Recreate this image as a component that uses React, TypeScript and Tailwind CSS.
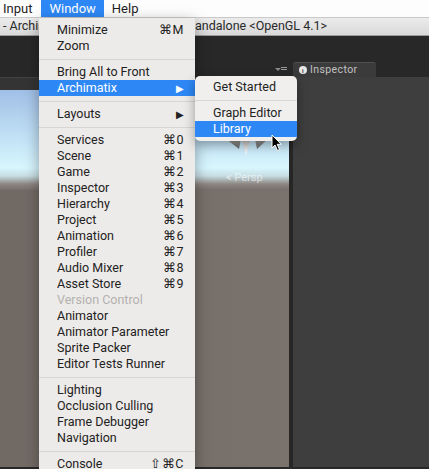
import React from 'react';

type Row =
  | { sep: true }
  | { label: string; keys?: string; arrow?: boolean; disabled?: boolean; active?: boolean };

const windowMenu: Row[] = [
  { label: 'Minimize', keys: '⌘M' },
  { label: 'Zoom' },
  { sep: true },
  { label: 'Bring All to Front' },
  { label: 'Archimatix', arrow: true, active: true },
  { sep: true },
  { label: 'Layouts', arrow: true },
  { sep: true },
  { label: 'Services', keys: '⌘0' },
  { label: 'Scene', keys: '⌘1' },
  { label: 'Game', keys: '⌘2' },
  { label: 'Inspector', keys: '⌘3' },
  { label: 'Hierarchy', keys: '⌘4' },
  { label: 'Project', keys: '⌘5' },
  { label: 'Animation', keys: '⌘6' },
  { label: 'Profiler', keys: '⌘7' },
  { label: 'Audio Mixer', keys: '⌘8' },
  { label: 'Asset Store', keys: '⌘9' },
  { label: 'Version Control', disabled: true },
  { label: 'Animator' },
  { label: 'Animator Parameter' },
  { label: 'Sprite Packer' },
  { label: 'Editor Tests Runner' },
  { sep: true },
  { label: 'Lighting' },
  { label: 'Occlusion Culling' },
  { label: 'Frame Debugger' },
  { label: 'Navigation' },
  { sep: true },
  { label: 'Console', keys: '⇧⌘C' },
];

const archimatixMenu: Row[] = [
  { label: 'Get Started' },
  { sep: true },
  { label: 'Graph Editor' },
  { label: 'Library', active: true },
];

function MenuRows({ rows }: { rows: Row[] }) {
  return (
    <>
      {rows.map((r, i) =>
        'sep' in r ? (
          <div key={i} className="flex h-[10px] items-center">
            <div className="h-px w-full bg-[#d8d6d4]" />
          </div>
        ) : (
          <div
            key={i}
            className={`flex h-4 items-center justify-between pl-[18px] pr-[11px] ${
              r.active ? 'bg-[#2d88f6] text-white' : r.disabled ? 'text-[#b3b1af]' : 'text-[#222]'
            }`}
          >
            <span>{r.label}</span>
            {r.keys && <span className="tracking-[0.5px]">{r.keys}</span>}
            {r.arrow && <span className="text-[10px]">▶</span>}
          </div>
        ),
      )}
    </>
  );
}

// orientation gizmo in the scene view corner
function Gizmo() {
  return (
    <svg width="52" height="24" viewBox="0 0 52 24" className="absolute left-[222px] top-[44px]">
      <defs>
        <linearGradient id="cone" x1="0" y1="0" x2="0" y2="1">
          <stop offset="0" stopColor="#a4a4a4" />
          <stop offset="1" stopColor="#6c6c6c" />
        </linearGradient>
        <linearGradient id="tip" x1="0" y1="0" x2="0" y2="1">
          <stop offset="0" stopColor="#c8c8c8" />
          <stop offset="1" stopColor="#ffffff" />
        </linearGradient>
      </defs>
      <path d="M3 4 L19 5 L17 15 Z" fill="url(#cone)" />
      <path d="M33 5 L47 4 L35 15 Z" fill="url(#cone)" />
      <path d="M20 7 L28 7 L24 21 Z" fill="url(#tip)" />
    </svg>
  );
}

function Cursor() {
  return (
    <svg width="12" height="18" viewBox="0 0 12 18" className="absolute left-[271px] top-[134px]">
      <path
        d="M1 1 L1 14 L4 11 L6.5 16.5 L8.5 15.6 L6.2 10.3 L10.2 10.3 Z"
        fill="#000"
        stroke="#fff"
        strokeWidth="1"
        strokeLinejoin="round"
      />
    </svg>
  );
}

export default function App() {
  return (
    <div className="relative h-[469px] w-[429px] overflow-hidden bg-[#282828] font-['Roboto','Liberation_Sans',sans-serif]">
      {/* system menu bar */}
      <div className="flex h-[18px] items-center border-b border-[#c9c9c9] bg-[#fdfdfd] text-[13px] text-[#1e1e1e]">
        <span className="pl-[3px] pr-[9px]">Input</span>
        <span className="flex h-full items-center bg-[#2d88f6] px-2 text-white">Window</span>
        <span className="pl-2">Help</span>
      </div>

      {/* editor window title */}
      <div className="flex h-[18px] items-center whitespace-nowrap border-b border-[#9a9a9a] bg-[linear-gradient(to_bottom,#ebebeb,#d9d9d9)] text-[12.5px] text-[#2a2a2a]">
        <span className="w-[195px] pl-[3px]">- Archimatix</span>
        <span>andalone &lt;OpenGL 4.1&gt;</span>
      </div>

      {/* main toolbar */}
      <div className="h-[26px] bg-[#282828]" />

      {/* dock tab strip */}
      <div className="flex h-[15px] items-end bg-[#282828]">
        <div className="flex w-[289px] justify-end pr-[2px]">
          <svg width="12" height="6" viewBox="0 0 12 6" className="mb-[5px]">
            <path d="M0 2 L3 5 L6 2 Z" fill="#8a8a8a" />
            <rect x="6" y="1" width="6" height="1" fill="#9a9a9a" />
            <rect x="6" y="3" width="6" height="1" fill="#9a9a9a" />
          </svg>
        </div>
        <div className="ml-[4px] flex h-[15px] w-[83px] items-center gap-[3px] rounded-t-[3px] border-t border-[#505050] bg-[#3b3b3b] pl-[6px] text-[10.5px] tracking-[0.4px] text-[#c2c2c2]">
          <span className="flex h-[8px] w-[8px] items-center justify-center rounded-full bg-[#e6e6e6] text-[6px] font-bold text-[#333]">
            i
          </span>
          Inspector
        </div>
      </div>

      <div className="flex h-[390px]">
        {/* scene view */}
        <div className="flex w-[289px] flex-col">
          <div className="h-[13px] border-t border-[#424242] bg-[#343434]" />
          <div className="relative flex flex-1 flex-col bg-[#766e69]">
            <div className="h-[100px] bg-[linear-gradient(to_bottom,#a0bfe6_0%,#bcdcf3_40%,#d8f6fe_78%,#c7dde2_86%,#8d8783_94%,#766e69_100%)]" />
            <div className="flex-1 bg-[linear-gradient(to_right,#716964,#7a726d)]" />
            <Gizmo />
            <span className="absolute left-[226px] top-[80px] text-[11px] text-white/60">&lt; Persp</span>
          </div>
        </div>
        <div className="w-[4px] bg-[#262626]" />
        {/* inspector panel */}
        <div className="flex-1 bg-[#3e3e3e]" />
      </div>

      {/* Window dropdown */}
      <div className="absolute left-[39px] top-[18px] w-[156px] bg-[#edebe9] pt-[4px] text-[12.5px] shadow-[0_4px_14px_rgba(0,0,0,0.35)]">
        <MenuRows rows={windowMenu} />
      </div>

      {/* Archimatix submenu */}
      <div className="absolute left-[195px] top-[76px] w-[102px] overflow-hidden rounded-[5px] bg-[#f0efee] pb-[4px] pt-[3px] text-[12.5px] shadow-[0_4px_12px_rgba(0,0,0,0.35)]">
        <MenuRows rows={archimatixMenu} />
      </div>

      <Cursor />
    </div>
  );
}
